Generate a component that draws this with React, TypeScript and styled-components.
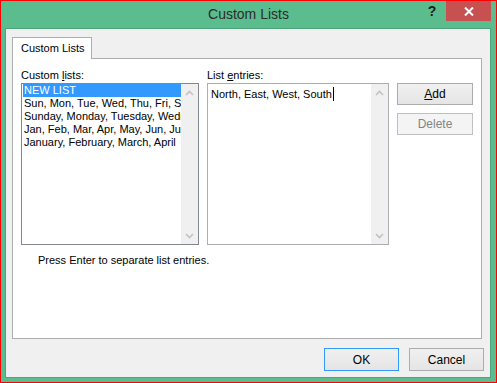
import React from "react";
import styled, { createGlobalStyle } from "styled-components";

const GlobalStyle = createGlobalStyle`
  html, body { margin: 0; padding: 0; background: #ffffff; }
  * { box-sizing: border-box; }
`;

const UI_FONT = `"Liberation Sans", Arial, sans-serif`;

const Window = styled.div`
  width: 497px;
  height: 383px;
  border: 1px solid #ff0000;
  background: #5bbd8d;
  display: flex;
  flex-direction: column;
  font-family: ${UI_FONT};
  font-size: 11px;
  color: #000;
`;

const TitleBar = styled.div`
  height: 27px;
  display: grid;
  grid-template-columns: 1fr auto 1fr;
  align-items: start;
`;

const Title = styled.div`
  grid-column: 2;
  line-height: 27px;
  font-size: 14px;
  color: #2b2b2b;
`;

const TitleButtons = styled.div`
  grid-column: 3;
  display: flex;
  justify-content: flex-end;
  align-items: flex-start;
  padding-right: 5px;
`;

const HelpButton = styled.div`
  width: 28px;
  height: 20px;
  display: flex;
  align-items: center;
  justify-content: center;
  font-weight: bold;
  font-size: 14px;
  color: #1e1e1e;
`;

const CloseButton = styled.div`
  width: 45px;
  height: 20px;
  background: #c75050;
  display: flex;
  align-items: center;
  justify-content: center;
`;

const Client = styled.div`
  flex: 1;
  margin: 0 5px 4px 4px;
  border: 1px solid #4ca57b;
  background: #f0f0f0;
  padding: 8px 6px 6px 6px;
  display: flex;
  flex-direction: column;
`;

const TabStrip = styled.div`
  display: flex;
  padding-left: 0;
`;

const Tab = styled.div`
  width: 80px;
  height: 22px;
  margin-bottom: -1px;
  border: 1px solid #adadad;
  border-bottom: none;
  background: #ffffff;
  padding-left: 8px;
  line-height: 21px;
  position: relative;
  z-index: 1;
`;

const Panel = styled.div`
  flex: 1;
  margin-right: 2px;
  border: 1px solid #adadad;
  background: #ffffff;
  padding: 9px 8px;
  display: flex;
  flex-direction: column;
`;

const Columns = styled.div`
  display: flex;
  gap: 8px;
`;

const Column = styled.div<{ $w: number }>`
  width: ${(p) => p.$w}px;
  display: flex;
  flex-direction: column;
`;

const Label = styled.div`
  height: 15px;
  line-height: 14px;
  white-space: nowrap;
`;

const Key = styled.span`
  text-decoration: underline;
`;

const ListBox = styled.div<{ $border: string }>`
  height: 162px;
  border: 1px solid ${(p) => p.$border};
  background: #ffffff;
  display: flex;
`;

const Items = styled.div`
  flex: 1;
  overflow: hidden;
  padding: 0 0 0 1px;
`;

const Item = styled.div<{ $selected?: boolean }>`
  height: 13px;
  line-height: 13px;
  white-space: nowrap;
  overflow: hidden;
  padding-left: 1px;
  background: ${(p) => (p.$selected ? "#3399ff" : "transparent")};
  color: ${(p) => (p.$selected ? "#ffffff" : "#000000")};
`;

const EditArea = styled.div`
  flex: 1;
  padding: 3px 0 0 3px;
  line-height: 14px;
  white-space: nowrap;
  overflow: hidden;
`;

const Caret = styled.span`
  display: inline-block;
  width: 1px;
  height: 14px;
  background: #000;
  vertical-align: -3px;
  margin-left: 1px;
`;

const ScrollBar = styled.div`
  width: 17px;
  background: #f0f0f0;
  display: flex;
  flex-direction: column;
  justify-content: space-between;
  align-items: center;
  padding: 6px 0 5px;
`;

const ButtonColumn = styled.div`
  padding-top: 15px;
  display: flex;
  flex-direction: column;
  gap: 8px;
`;

const Button = styled.div<{ $disabled?: boolean; $default?: boolean; $w?: number }>`
  width: ${(p) => p.$w ?? 76}px;
  height: ${(p) => (p.$w ? 23 : 22)}px;
  display: flex;
  align-items: center;
  justify-content: center;
  border: 1px solid
    ${(p) => (p.$default ? "#3399ff" : p.$disabled ? "#bfbfbf" : "#acacac")};
  background: ${(p) =>
    p.$disabled ? "#f4f4f4" : "linear-gradient(#f0f0f0, #e5e5e5)"};
  color: ${(p) => (p.$disabled ? "#838383" : "#000")};
  font-size: ${(p) => (p.$w ? 12 : 12)}px;
`;

const Hint = styled.div`
  margin-top: 8px;
  padding-left: 17px;
  line-height: 15px;
`;

const Footer = styled.div`
  margin-top: 9px;
  display: flex;
  justify-content: flex-end;
  gap: 10px;
`;

const Chevron = ({ up }: { up?: boolean }) => (
  <svg width="9" height="6" viewBox="0 0 9 6">
    <polyline
      points={up ? "1,5 4.5,1.5 8,5" : "1,1 4.5,4.5 8,1"}
      fill="none"
      stroke="#c2c2c2"
      strokeWidth="1.6"
    />
  </svg>
);

export default function App() {
  return (
    <>
      <GlobalStyle />
      <Window>
        <TitleBar>
          <Title>Custom Lists</Title>
          <TitleButtons>
            <HelpButton>?</HelpButton>
            <CloseButton>
              <svg width="10" height="9" viewBox="0 0 10 9">
                <path d="M1 0.5 L9 8.5 M9 0.5 L1 8.5" stroke="#fff" strokeWidth="2" />
              </svg>
            </CloseButton>
          </TitleButtons>
        </TitleBar>
        <Client>
          <TabStrip>
            <Tab>Custom Lists</Tab>
          </TabStrip>
          <Panel>
            <Columns>
              <Column $w={178}>
                <Label>
                  Custom <Key>l</Key>ists:
                </Label>
                <ListBox $border="#828790">
                  <Items>
                    <Item $selected>NEW LIST</Item>
                    <Item>Sun, Mon, Tue, Wed, Thu, Fri, Sat</Item>
                    <Item>Sunday, Monday, Tuesday, Wednesday</Item>
                    <Item>Jan, Feb, Mar, Apr, May, Jun, Jul</Item>
                    <Item>January, February, March, April</Item>
                  </Items>
                  <ScrollBar>
                    <Chevron up />
                    <Chevron />
                  </ScrollBar>
                </ListBox>
              </Column>
              <Column $w={183}>
                <Label>
                  List <Key>e</Key>ntries:
                </Label>
                <ListBox $border="#abadb3">
                  <EditArea>
                    North, East, West, South
                    <Caret />
                  </EditArea>
                  <ScrollBar>
                    <Chevron up />
                    <Chevron />
                  </ScrollBar>
                </ListBox>
              </Column>
              <ButtonColumn>
                <Button>
                  <span>
                    <Key>A</Key>dd
                  </span>
                </Button>
                <Button $disabled>Delete</Button>
              </ButtonColumn>
            </Columns>
            <Hint>Press Enter to separate list entries.</Hint>
          </Panel>
          <Footer>
            <Button $default $w={75}>OK</Button>
            <Button $w={75}>Cancel</Button>
          </Footer>
        </Client>
      </Window>
    </>
  );
}
